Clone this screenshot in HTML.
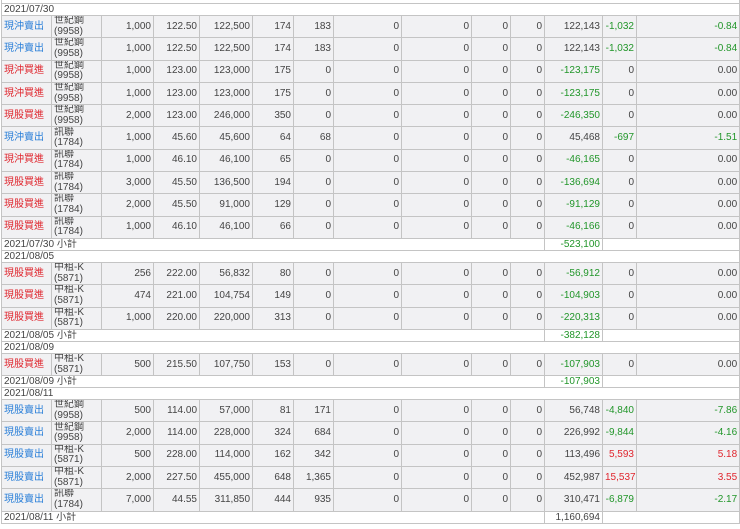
<!DOCTYPE html>
<html><head><meta charset="utf-8"><style>
body{margin:0;background:#fff;width:740px;height:529px;overflow:hidden;font-family:"Liberation Sans","Noto Sans CJK TC",sans-serif;}
table{position:absolute;left:1px;top:-9px;border-collapse:collapse;table-layout:fixed;width:738px;font-size:10px;color:#444;}
td{border:1px solid #c4c4c4;padding:0 2px;text-align:right;white-space:nowrap;overflow:hidden;line-height:10px;}
tr.d td{height:21.3px;background:#f1f1f3;}
tr.h td{height:11px;background:#fff;text-align:left;line-height:11px;}
td.t,td.n{text-align:left;}
td.n{line-height:10.6px;}
.b{color:#2a7fd8}.r{color:#e0262e}.g{color:#22962a}.rr{color:#e0262e}
</style></head><body>
<table>
<colgroup><col style="width:50px"><col style="width:50px"><col style="width:52px"><col style="width:46px"><col style="width:53px"><col style="width:41px"><col style="width:40px"><col style="width:68px"><col style="width:70px"><col style="width:39px"><col style="width:34px"><col style="width:58px"><col style="width:34px"><col style="width:103px"></colgroup>
<tr class="h"><td colspan="14"></td></tr>
<tr class="h"><td colspan="14">2021/07/30</td></tr>
<tr class="d"><td class="t b">現沖賣出</td><td class="n">世紀鋼<br>(9958)</td><td>1,000</td><td>122.50</td><td>122,500</td><td>174</td><td>183</td><td>0</td><td>0</td><td>0</td><td>0</td><td>122,143</td><td class="g">-1,032</td><td class="g">-0.84</td></tr>
<tr class="d"><td class="t b">現沖賣出</td><td class="n">世紀鋼<br>(9958)</td><td>1,000</td><td>122.50</td><td>122,500</td><td>174</td><td>183</td><td>0</td><td>0</td><td>0</td><td>0</td><td>122,143</td><td class="g">-1,032</td><td class="g">-0.84</td></tr>
<tr class="d"><td class="t r">現沖買進</td><td class="n">世紀鋼<br>(9958)</td><td>1,000</td><td>123.00</td><td>123,000</td><td>175</td><td>0</td><td>0</td><td>0</td><td>0</td><td>0</td><td class="g">-123,175</td><td>0</td><td>0.00</td></tr>
<tr class="d"><td class="t r">現沖買進</td><td class="n">世紀鋼<br>(9958)</td><td>1,000</td><td>123.00</td><td>123,000</td><td>175</td><td>0</td><td>0</td><td>0</td><td>0</td><td>0</td><td class="g">-123,175</td><td>0</td><td>0.00</td></tr>
<tr class="d"><td class="t r">現股買進</td><td class="n">世紀鋼<br>(9958)</td><td>2,000</td><td>123.00</td><td>246,000</td><td>350</td><td>0</td><td>0</td><td>0</td><td>0</td><td>0</td><td class="g">-246,350</td><td>0</td><td>0.00</td></tr>
<tr class="d"><td class="t b">現沖賣出</td><td class="n">訊聯<br>(1784)</td><td>1,000</td><td>45.60</td><td>45,600</td><td>64</td><td>68</td><td>0</td><td>0</td><td>0</td><td>0</td><td>45,468</td><td class="g">-697</td><td class="g">-1.51</td></tr>
<tr class="d"><td class="t r">現沖買進</td><td class="n">訊聯<br>(1784)</td><td>1,000</td><td>46.10</td><td>46,100</td><td>65</td><td>0</td><td>0</td><td>0</td><td>0</td><td>0</td><td class="g">-46,165</td><td>0</td><td>0.00</td></tr>
<tr class="d"><td class="t r">現股買進</td><td class="n">訊聯<br>(1784)</td><td>3,000</td><td>45.50</td><td>136,500</td><td>194</td><td>0</td><td>0</td><td>0</td><td>0</td><td>0</td><td class="g">-136,694</td><td>0</td><td>0.00</td></tr>
<tr class="d"><td class="t r">現股買進</td><td class="n">訊聯<br>(1784)</td><td>2,000</td><td>45.50</td><td>91,000</td><td>129</td><td>0</td><td>0</td><td>0</td><td>0</td><td>0</td><td class="g">-91,129</td><td>0</td><td>0.00</td></tr>
<tr class="d"><td class="t r">現股買進</td><td class="n">訊聯<br>(1784)</td><td>1,000</td><td>46.10</td><td>46,100</td><td>66</td><td>0</td><td>0</td><td>0</td><td>0</td><td>0</td><td class="g">-46,166</td><td>0</td><td>0.00</td></tr>
<tr class="h"><td colspan="11">2021/07/30 小計</td><td class="g" style="text-align:right">-523,100</td><td colspan="2"></td></tr>
<tr class="h"><td colspan="14">2021/08/05</td></tr>
<tr class="d"><td class="t r">現股買進</td><td class="n">中租-K<br>(5871)</td><td>256</td><td>222.00</td><td>56,832</td><td>80</td><td>0</td><td>0</td><td>0</td><td>0</td><td>0</td><td class="g">-56,912</td><td>0</td><td>0.00</td></tr>
<tr class="d"><td class="t r">現股買進</td><td class="n">中租-K<br>(5871)</td><td>474</td><td>221.00</td><td>104,754</td><td>149</td><td>0</td><td>0</td><td>0</td><td>0</td><td>0</td><td class="g">-104,903</td><td>0</td><td>0.00</td></tr>
<tr class="d"><td class="t r">現股買進</td><td class="n">中租-K<br>(5871)</td><td>1,000</td><td>220.00</td><td>220,000</td><td>313</td><td>0</td><td>0</td><td>0</td><td>0</td><td>0</td><td class="g">-220,313</td><td>0</td><td>0.00</td></tr>
<tr class="h"><td colspan="11">2021/08/05 小計</td><td class="g" style="text-align:right">-382,128</td><td colspan="2"></td></tr>
<tr class="h"><td colspan="14">2021/08/09</td></tr>
<tr class="d"><td class="t r">現股買進</td><td class="n">中租-K<br>(5871)</td><td>500</td><td>215.50</td><td>107,750</td><td>153</td><td>0</td><td>0</td><td>0</td><td>0</td><td>0</td><td class="g">-107,903</td><td>0</td><td>0.00</td></tr>
<tr class="h"><td colspan="11">2021/08/09 小計</td><td class="g" style="text-align:right">-107,903</td><td colspan="2"></td></tr>
<tr class="h"><td colspan="14">2021/08/11</td></tr>
<tr class="d"><td class="t b">現股賣出</td><td class="n">世紀鋼<br>(9958)</td><td>500</td><td>114.00</td><td>57,000</td><td>81</td><td>171</td><td>0</td><td>0</td><td>0</td><td>0</td><td>56,748</td><td class="g">-4,840</td><td class="g">-7.86</td></tr>
<tr class="d"><td class="t b">現股賣出</td><td class="n">世紀鋼<br>(9958)</td><td>2,000</td><td>114.00</td><td>228,000</td><td>324</td><td>684</td><td>0</td><td>0</td><td>0</td><td>0</td><td>226,992</td><td class="g">-9,844</td><td class="g">-4.16</td></tr>
<tr class="d"><td class="t b">現股賣出</td><td class="n">中租-K<br>(5871)</td><td>500</td><td>228.00</td><td>114,000</td><td>162</td><td>342</td><td>0</td><td>0</td><td>0</td><td>0</td><td>113,496</td><td class="rr">5,593</td><td class="rr">5.18</td></tr>
<tr class="d"><td class="t b">現股賣出</td><td class="n">中租-K<br>(5871)</td><td>2,000</td><td>227.50</td><td>455,000</td><td>648</td><td>1,365</td><td>0</td><td>0</td><td>0</td><td>0</td><td>452,987</td><td class="rr">15,537</td><td class="rr">3.55</td></tr>
<tr class="d"><td class="t b">現股賣出</td><td class="n">訊聯<br>(1784)</td><td>7,000</td><td>44.55</td><td>311,850</td><td>444</td><td>935</td><td>0</td><td>0</td><td>0</td><td>0</td><td>310,471</td><td class="g">-6,879</td><td class="g">-2.17</td></tr>
<tr class="h"><td colspan="11">2021/08/11 小計</td><td style="text-align:right">1,160,694</td><td colspan="2"></td></tr>
</table>
</body></html>
